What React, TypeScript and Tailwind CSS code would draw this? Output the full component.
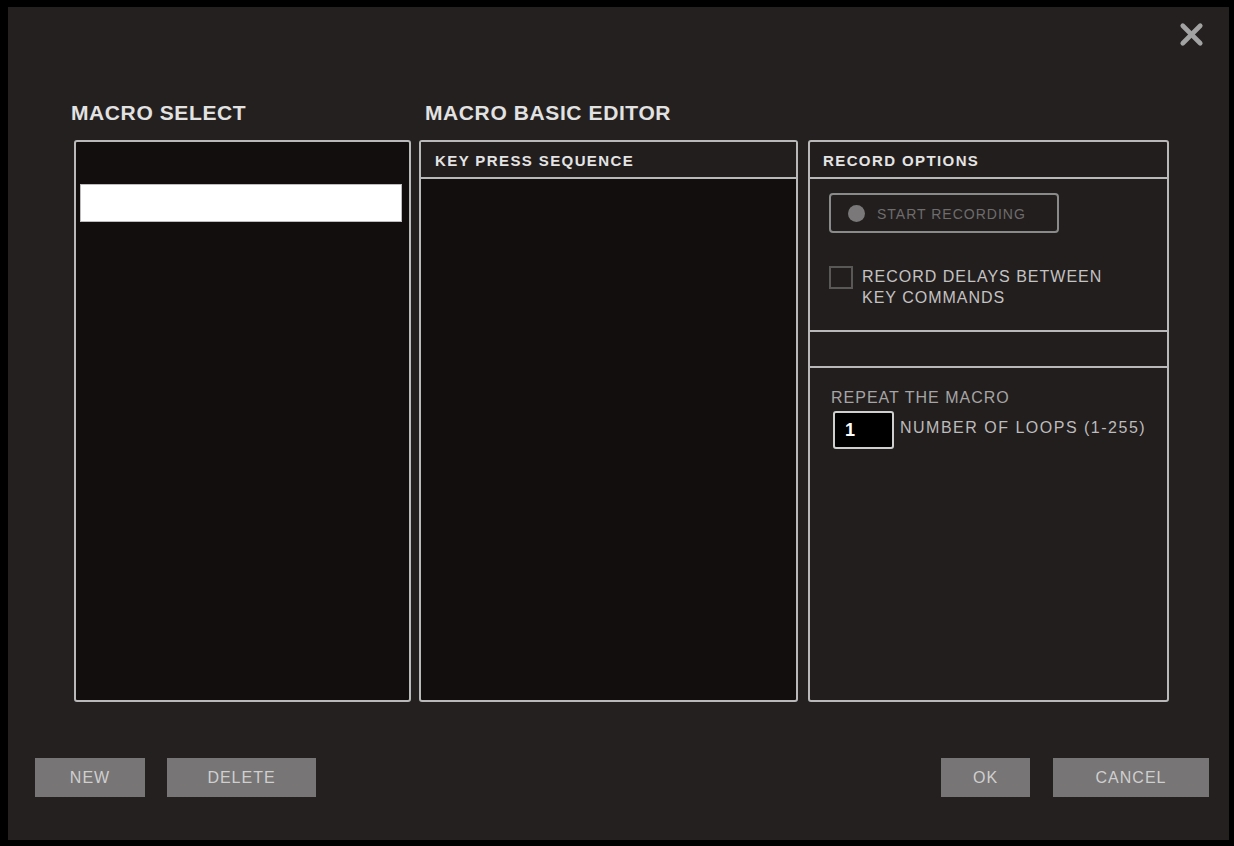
import { X } from 'lucide-react'

const FONT = { fontFamily: '"Liberation Sans", Arial, sans-serif' }

function GrayButton({ label, width }: { label: string; width: string }) {
  return (
    <button
      className={`${width} h-[39px] bg-[#777575] text-[#cfcfcf] text-[16px] tracking-[1px] flex items-center justify-center`}
    >
      {label}
    </button>
  )
}

export default function App() {
  return (
    <div className="w-[1234px] h-[846px] bg-black pt-[7px] pl-[8px] pr-[5px] pb-[6px]" style={FONT}>
      <div className="relative w-full h-full bg-[#242020] flex flex-col">
        {/* close */}
        <button className="absolute top-[10px] right-[20px] text-[#a3a3a3]">
          <X size={35} strokeWidth={3.2} />
        </button>

        {/* titles + panels */}
        <div className="pl-[66px] pt-[93px]">
          <div className="flex h-[26px] items-center text-[#e2e2e2] text-[21px] font-bold tracking-[0.6px]">
            <div className="w-[354px] -ml-[3px]">MACRO SELECT</div>
            <div>MACRO BASIC EDITOR</div>
          </div>

          <div className="flex mt-[14px] h-[562px]">
            {/* macro select list */}
            <div className="w-[337px] border-2 border-[#b9b9b9] rounded-[3px] bg-[#120e0d] pt-[42px] pl-[4px] pr-[7px]">
              <div className="h-[38px] bg-white border border-[#bdbdbd]" />
            </div>

            {/* key press sequence */}
            <div className="ml-[8px] w-[379px] border-2 border-[#b9b9b9] rounded-[3px] bg-[#120e0d] flex flex-col">
              <div className="h-[37px] border-b-2 border-[#b9b9b9] bg-[#221e1e] flex items-center pt-[4px] px-[14px] text-[#e4e4e4] text-[15px] font-bold tracking-[1.4px]">
                KEY PRESS SEQUENCE
              </div>
              <div className="flex-1" />
            </div>

            {/* record options */}
            <div className="ml-[10px] w-[361px] border-2 border-[#b9b9b9] rounded-[3px] bg-[#221e1e] flex flex-col">
              <div className="h-[37px] border-b-2 border-[#b9b9b9] flex items-center pt-[4px] px-[13px] text-[#e4e4e4] text-[15px] font-bold tracking-[1.4px]">
                RECORD OPTIONS
              </div>
              <div className="h-[153px] border-b-2 border-[#b9b9b9] px-[19px] pt-[14px]">
                <button className="w-[230px] h-[40px] border-2 border-[#8a8a8a] rounded-[4px] flex items-center gap-[12px] pl-[17px] pt-[2px] text-[#6e6c6c] text-[14px] tracking-[1px]">
                  <span className="w-[17px] h-[17px] rounded-full bg-[#7a7878] -mt-[2px]" />
                  START RECORDING
                </button>
                <div className="flex items-start gap-[9px] mt-[33px]">
                  <span className="w-[24px] h-[23px] border-2 border-[#5a5757] shrink-0" />
                  <div className="text-[#c4c2c2] text-[16px] leading-[21px] tracking-[1px]">
                    RECORD DELAYS BETWEEN
                    <br />
                    KEY COMMANDS
                  </div>
                </div>
              </div>
              <div className="h-[36px] border-b-2 border-[#b9b9b9]" />
              <div className="pl-[21px] pt-[20px]">
                <div className="text-[#a6a4a4] text-[16px] tracking-[1px] leading-[20px]">REPEAT THE MACRO</div>
                <div className="flex items-center gap-[6px] mt-[3px] pl-[2px]">
                  <div className="w-[61px] h-[38px] shrink-0 bg-black border-2 border-[#cfcfcf] rounded-[3px] flex items-center pl-[10px] text-white text-[18px] font-bold">
                    1
                  </div>
                  <span className="whitespace-nowrap text-[#bdbbbb] text-[16px] tracking-[1.5px] -mt-[4px]">NUMBER OF LOOPS (1-255)</span>
                </div>
              </div>
            </div>
          </div>
        </div>

        {/* bottom buttons */}
        <div className="flex justify-between items-center pl-[27px] pr-[20px] mt-[56px]">
          <div className="flex gap-[22px]">
            <GrayButton label="NEW" width="w-[110px]" />
            <GrayButton label="DELETE" width="w-[149px]" />
          </div>
          <div className="flex gap-[23px]">
            <GrayButton label="OK" width="w-[89px]" />
            <GrayButton label="CANCEL" width="w-[156px]" />
          </div>
        </div>
      </div>
    </div>
  )
}
